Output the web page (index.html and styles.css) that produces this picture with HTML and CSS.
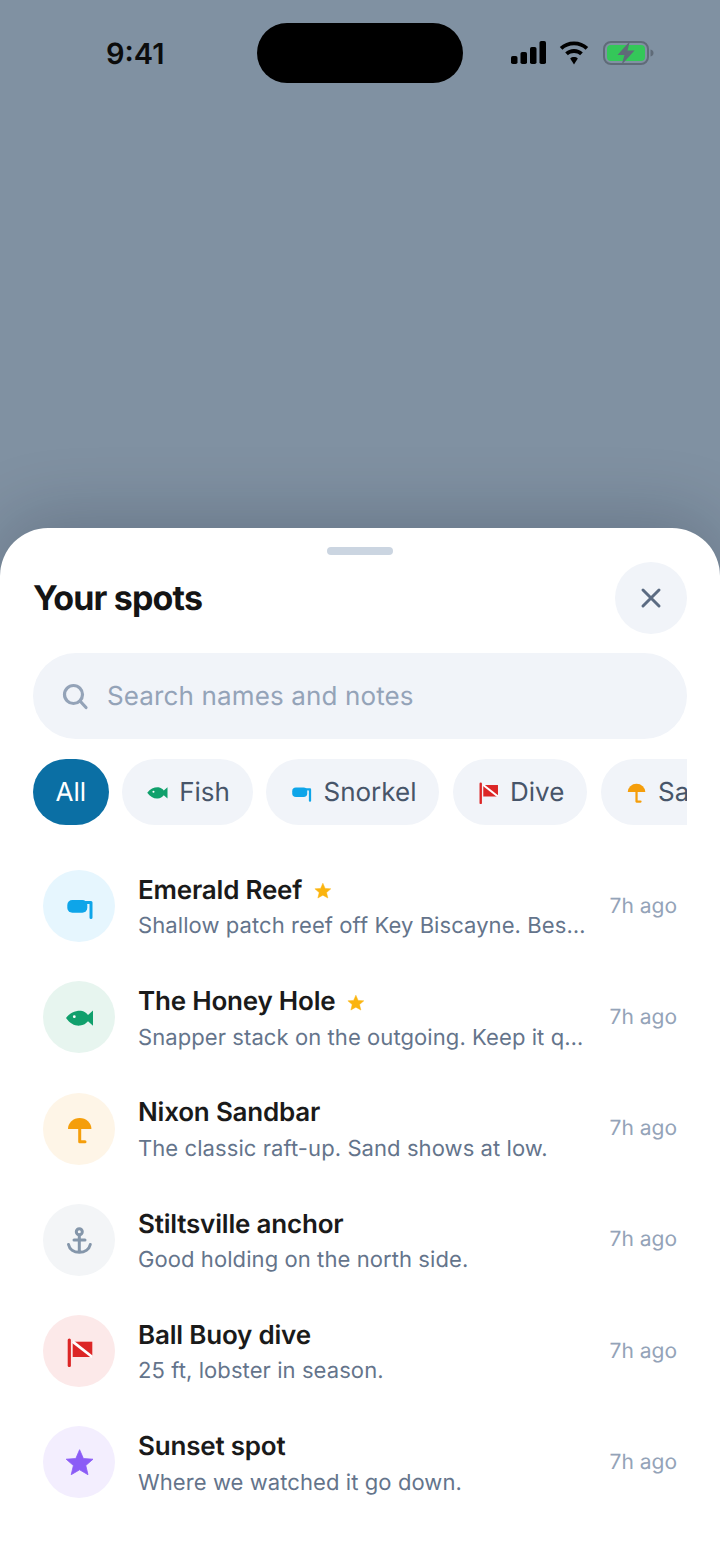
FILE: index.html
```html
<!DOCTYPE html>
<html lang="en">
<head>
    <meta charset="UTF-8">
    <meta name="viewport" content="width=device-width, initial-scale=1.0">
    <title>Your spots</title>
    <link rel="stylesheet" href="styles.css">
</head>
<body>

    <svg class="defs" width="0" height="0" aria-hidden="true">
        <symbol id="i-fish" viewBox="0 0 32 32">
            <path fill="#10a06c" d="M3 17C7 11.500 12.500 9.500 18 9.800C21 10.200 23.500 12 25 14L30 9.500V24.800L25 20.200C23 22.500 20.500 24.200 17 24.600C12 25 7 22.800 3 17Z"/>
            <circle cx="11.300" cy="15.700" r="1.400" fill="#fff"/>
        </symbol>
        <symbol id="i-snorkel" viewBox="0 0 32 32">
            <rect x="4.300" y="10" width="20" height="12.800" rx="5" fill="#0ea5e9"/>
            <path fill="none" stroke="#0ea5e9" stroke-width="3" stroke-linecap="round" stroke-linejoin="round" d="M22 12.500H28V27.500"/>
        </symbol>
        <symbol id="i-umbrella" viewBox="0 0 32 32">
            <path fill="#f59e0b" d="M5 16A11.700 11 0 0 1 28.400 16Z"/>
            <path fill="none" stroke="#f59e0b" stroke-width="3" stroke-linecap="round" stroke-linejoin="round" d="M16.700 15V28.700H22"/>
        </symbol>
        <symbol id="i-anchor" viewBox="0 0 32 32">
            <g fill="none" stroke="#8496aa" stroke-width="3" stroke-linecap="round">
                <circle cx="16.300" cy="7.700" r="3"/>
                <path d="M16.300 11V28.300M11 16H22M5.500 20.500C6.500 25.500 11 28.300 16.300 28.300C21.600 28.300 26.200 25.500 27.300 20.500"/>
            </g>
        </symbol>
        <symbol id="i-flag" viewBox="0 0 32 32">
            <path fill="none" stroke="#dc2626" stroke-width="3.200" stroke-linecap="round" d="M6.300 5V30.500"/>
            <rect x="9.700" y="6.700" width="19.600" height="15.300" fill="#dc2626"/>
            <path stroke="#fff" stroke-width="2.800" d="M9.700 6.700L29.300 22"/>
        </symbol>
        <symbol id="i-star" viewBox="0 0 32 32">
            <path fill="currentColor" stroke="currentColor" stroke-width="0.800" stroke-linejoin="round" d="M16.600 3.700L20.400 12.500L30 13.200L22.800 19.500L25 28.700L16.600 23.800L8.200 28.700L10.400 19.500L3.200 13.200L12.800 12.500Z"/>
        </symbol>
    </svg>

    <div class="backdrop">
        <div class="statusbar">
            <div class="time">9:41</div>
            <div class="island"></div>
            <div class="status-icons">
                <svg width="36" height="23" viewBox="0 0 36 23">
                    <rect x="0" y="15" width="6.500" height="8" rx="1.800"/>
                    <rect x="9.500" y="11" width="6.500" height="12" rx="1.800"/>
                    <rect x="19" y="6" width="6.500" height="17" rx="1.800"/>
                    <rect x="28.500" y="0" width="6.500" height="23" rx="1.800"/>
                </svg>
                <svg class="wifi" width="32" height="24" viewBox="0 0 32 24">
                    <path d="M16 4C21.500 4 26.500 6 30.200 9.500L27.600 12.300C24.600 9.500 20.500 7.800 16 7.800C11.500 7.800 7.400 9.500 4.400 12.300L1.800 9.500C5.500 6 10.500 4 16 4Z" transform="translate(0 -3.500)"/>
                    <path d="M16 9.500C19.400 9.500 22.500 10.800 24.800 12.900L22.100 15.700C20.500 14.300 18.400 13.400 16 13.400C13.600 13.400 11.500 14.300 9.900 15.700L7.200 12.900C9.500 10.800 12.600 9.500 16 9.500Z" transform="translate(0 -1.500)"/>
                    <path d="M16 16C17.500 16 18.800 16.500 19.800 17.400L16 23.500L12.200 17.400C13.200 16.500 14.500 16 16 16Z"/>
                </svg>
                <svg width="51" height="24" viewBox="0 0 51 24">
                    <rect x="1" y="1" width="44" height="22" rx="7" fill="none" stroke="#5f6b78" stroke-width="2"/>
                    <rect x="4" y="4" width="38" height="16" rx="4" fill="#34c759"/>
                    <path d="M47.500 8.500C49.500 9 50.500 10.300 50.500 12C50.500 13.700 49.500 15 47.500 15.500Z" fill="#5f6b78"/>
                    <path d="M27 0L14.500 14H21.500L18.500 24L31.500 9.500H24.500Z" fill="#5f6b78"/>
                </svg>
            </div>
        </div>
    </div>

    <div class="sheet">
        <div class="grabber"></div>

        <div class="sheet-head">
            <h1>Your spots</h1>
            <button class="close">
                <svg width="24" height="24" viewBox="0 0 24 24"><path d="M4 4L20 20M20 4L4 20"/></svg>
            </button>
        </div>

        <div class="search">
            <svg width="28" height="28" viewBox="0 0 28 28"><circle cx="12.500" cy="12.500" r="9"/><path d="M19 19L25 25.500"/></svg>
            <span>Search names and notes</span>
        </div>

        <div class="chips">
            <div class="chip active">All</div>
            <div class="chip"><svg class="chip-icon"><use href="#i-fish"/></svg>Fish</div>
            <div class="chip"><svg class="chip-icon"><use href="#i-snorkel"/></svg>Snorkel</div>
            <div class="chip"><svg class="chip-icon"><use href="#i-flag"/></svg>Dive</div>
            <div class="chip"><svg class="chip-icon"><use href="#i-umbrella"/></svg>Sandbar</div>
        </div>

        <div class="spots">
            <div class="spot">
                <div class="spot-icon blue"><svg><use href="#i-snorkel"/></svg></div>
                <div class="spot-text">
                    <div class="spot-name">Emerald Reef <svg class="fav"><use href="#i-star"/></svg></div>
                    <div class="spot-note">Shallow patch reef off Key Biscayne. Best on a rising tide.</div>
                </div>
                <div class="spot-time">7h ago</div>
            </div>
            <div class="spot">
                <div class="spot-icon green"><svg><use href="#i-fish"/></svg></div>
                <div class="spot-text">
                    <div class="spot-name">The Honey Hole <svg class="fav"><use href="#i-star"/></svg></div>
                    <div class="spot-note">Snapper stack on the outgoing. Keep it quiet out here.</div>
                </div>
                <div class="spot-time">7h ago</div>
            </div>
            <div class="spot">
                <div class="spot-icon orange"><svg><use href="#i-umbrella"/></svg></div>
                <div class="spot-text">
                    <div class="spot-name">Nixon Sandbar</div>
                    <div class="spot-note">The classic raft-up. Sand shows at low.</div>
                </div>
                <div class="spot-time">7h ago</div>
            </div>
            <div class="spot">
                <div class="spot-icon grey"><svg><use href="#i-anchor"/></svg></div>
                <div class="spot-text">
                    <div class="spot-name">Stiltsville anchor</div>
                    <div class="spot-note">Good holding on the north side.</div>
                </div>
                <div class="spot-time">7h ago</div>
            </div>
            <div class="spot">
                <div class="spot-icon red"><svg><use href="#i-flag"/></svg></div>
                <div class="spot-text">
                    <div class="spot-name">Ball Buoy dive</div>
                    <div class="spot-note">25 ft, lobster in season.</div>
                </div>
                <div class="spot-time">7h ago</div>
            </div>
            <div class="spot">
                <div class="spot-icon purple"><svg><use href="#i-star"/></svg></div>
                <div class="spot-text">
                    <div class="spot-name">Sunset spot</div>
                    <div class="spot-note">Where we watched it go down.</div>
                </div>
                <div class="spot-time">7h ago</div>
            </div>
        </div>
    </div>

</body>
</html>
```

FILE: styles.css
```css
* {
    box-sizing: border-box;
}

body {
    margin: 0;
    width: 720px;
    height: 1564px;
    overflow: hidden;
    font-family: Inter, "Noto Sans", sans-serif;
    text-rendering: geometricPrecision;
    background-color: #8091a2;
}

.defs {
    position: absolute;
}

.backdrop {
    height: 528px;
    background-color: #8091a2;
}

.statusbar {
    display: grid;
    grid-template-columns: 257px 206px 257px;
    padding-top: 23px;
}

.time {
    padding: 13px 0 0 106px;
    font-size: 29px;
    line-height: 36px;
    font-weight: 600;
    color: #0c0c0c;
}

.island {
    height: 60px;
    background-color: #000;
    border-radius: 30px;
}

.status-icons {
    display: flex;
    align-items: flex-start;
    gap: 13px;
    padding: 18px 0 0 48px;
}

.status-icons svg {
    flex: none;
}

.status-icons .wifi {
    margin-left: -2px;
}

.sheet {
    height: 1036px;
    padding: 19px 33px 0;
    background-color: #fff;
    border-radius: 48px 48px 0 0;
    box-shadow: 0 -10px 70px rgba(15, 23, 42, 0.22);
}

.grabber {
    width: 66px;
    height: 8px;
    margin: 0 auto;
    background-color: #cbd5e1;
    border-radius: 4px;
}

.sheet-head {
    display: flex;
    align-items: center;
    justify-content: space-between;
    margin-top: 7px;
}

h1 {
    margin: 0;
    font-size: 34px;
    font-weight: 700;
    letter-spacing: -0.85px;
    color: #141414;
}

.close {
    display: flex;
    align-items: center;
    justify-content: center;
    width: 72px;
    height: 72px;
    padding: 0;
    border: none;
    border-radius: 50%;
    background-color: #f1f4f9;
}

.close path {
    fill: none;
    stroke: #5b6b82;
    stroke-width: 3;
    stroke-linecap: round;
}

.search {
    display: flex;
    align-items: center;
    gap: 18px;
    height: 86px;
    margin-top: 19px;
    padding-left: 28px;
    background-color: #f1f4f9;
    border-radius: 43px;
    font-size: 26px;
    letter-spacing: 0.13px;
    color: #94a3b8;
}

.search span {
    padding-top: 1px;
}

.search svg {
    flex: none;
}

.search circle,
.search path {
    fill: none;
    stroke: #94a3b8;
    stroke-width: 3.2;
    stroke-linecap: round;
}

.chips {
    display: flex;
    gap: 13.6px;
    margin-top: 20px;
    overflow: hidden;
}

.chip {
    display: flex;
    flex: none;
    align-items: center;
    gap: 10px;
    height: 66px;
    padding: 0 23px;
    background-color: #f1f4f9;
    border-radius: 33px;
    font-size: 26px;
    color: #475569;
}

.chip.active {
    padding: 0 22.5px;
    background-color: #0b6fa4;
    color: #fff;
}

.chip-icon {
    flex: none;
    width: 24px;
    height: 24px;
}

.spots {
    margin-top: 25.4px;
}

.spot {
    display: flex;
    align-items: center;
    padding: 19.65px 10px;
}

.spot-icon {
    display: flex;
    flex: none;
    align-items: center;
    justify-content: center;
    width: 72px;
    height: 72px;
    border-radius: 50%;
}

.spot-icon svg {
    width: 32px;
    height: 32px;
}

.blue { background-color: #e6f6fe; }
.green { background-color: #e7f5ef; }
.orange { background-color: #fef5e7; }
.grey { background-color: #f3f5f7; }
.red { background-color: #fce9e9; }
.purple { background-color: #f3eefe; color: #8b5cf6; }

.spot-text {
    flex: 1;
    min-width: 0;
    margin: 3px 0 0 23px;
}

.spot-name {
    display: flex;
    align-items: center;
    gap: 11px;
    font-size: 26px;
    line-height: 32px;
    font-weight: 600;
    letter-spacing: -0.2px;
    color: #1a1a1a;
}

.fav {
    width: 19px;
    height: 19px;
    color: #fbb40f;
}

.spot-note {
    margin-top: 5.5px;
    overflow: hidden;
    font-size: 22px;
    line-height: 28px;
    letter-spacing: 0.08px;
    color: #64748b;
    white-space: nowrap;
    text-overflow: ellipsis;
}

.spot-time {
    flex: none;
    margin-left: 24px;
    font-size: 21px;
    color: #94a3b8;
}
```
